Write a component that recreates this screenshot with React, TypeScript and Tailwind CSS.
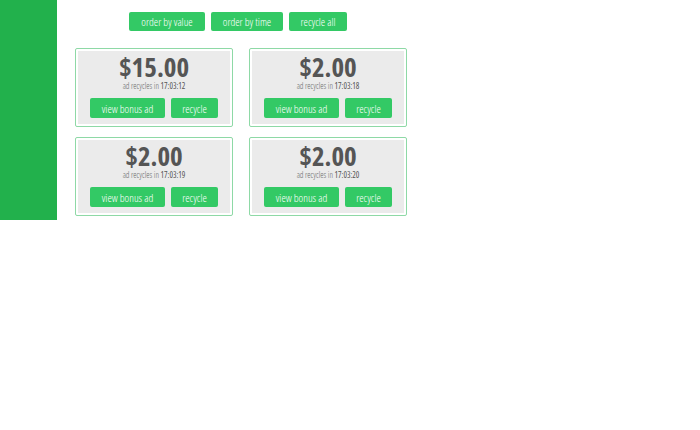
import React from "react";

const cards = [
  { price: "$15.00", time: "17:03:12" },
  { price: "$2.00", time: "17:03:18" },
  { price: "$2.00", time: "17:03:19" },
  { price: "$2.00", time: "17:03:20" },
];

function Btn({ children, w }: { children: React.ReactNode; w: string }) {
  return (
    <button
      className={`${w} h-[20px] rounded-[2px] bg-[#33c965] text-white text-[11px] font-[350] leading-none flex items-center justify-center`}
    >
      {children}
    </button>
  );
}

const topBtn =
  "h-[19px] rounded-[2px] bg-[#33c965] text-white text-[11px] font-[350] leading-none flex items-center justify-center";

export default function App() {
  return (
    <div
      className="w-[700px] h-[430px] bg-white flex items-start font-stretch-condensed"
      style={{ fontFamily: '"Open Sans", "Liberation Sans", sans-serif' }}
    >
      <div className="w-[57px] h-[220px] bg-[#22b14c] shrink-0" />
      <div className="pl-[18px] pt-[12px]">
        <div className="flex gap-[6px] pl-[54px]">
          <button className={`w-[76px] ${topBtn}`}>order by value</button>
          <button className={`w-[72px] ${topBtn}`}>order by time</button>
          <button className={`w-[58px] ${topBtn}`}>recycle all</button>
        </div>
        <div className="grid grid-cols-[158px_158px] gap-x-[16px] gap-y-[10px] mt-[17px]">
          {cards.map((c, i) => (
            <div
              key={i}
              className="h-[79px] border border-[#8ed9a6] rounded-[2px] p-[2px] bg-white"
            >
              <div className="h-full bg-[#ebebeb] flex flex-col items-center pt-[2px]">
                <div className="text-[27px] font-bold text-[#555555] leading-[28px]">
                  {c.price}
                </div>
                <div className="text-[8.3px] text-[#666666] font-[350] leading-[10px]">
                  ad recycles in <span className="font-medium text-[#555]">{c.time}</span>
                </div>
                <div className="flex gap-[6px] mt-[7px]">
                  <Btn w="w-[75px]">view bonus ad</Btn>
                  <Btn w="w-[47px]">recycle</Btn>
                </div>
              </div>
            </div>
          ))}
        </div>
      </div>
    </div>
  );
}
